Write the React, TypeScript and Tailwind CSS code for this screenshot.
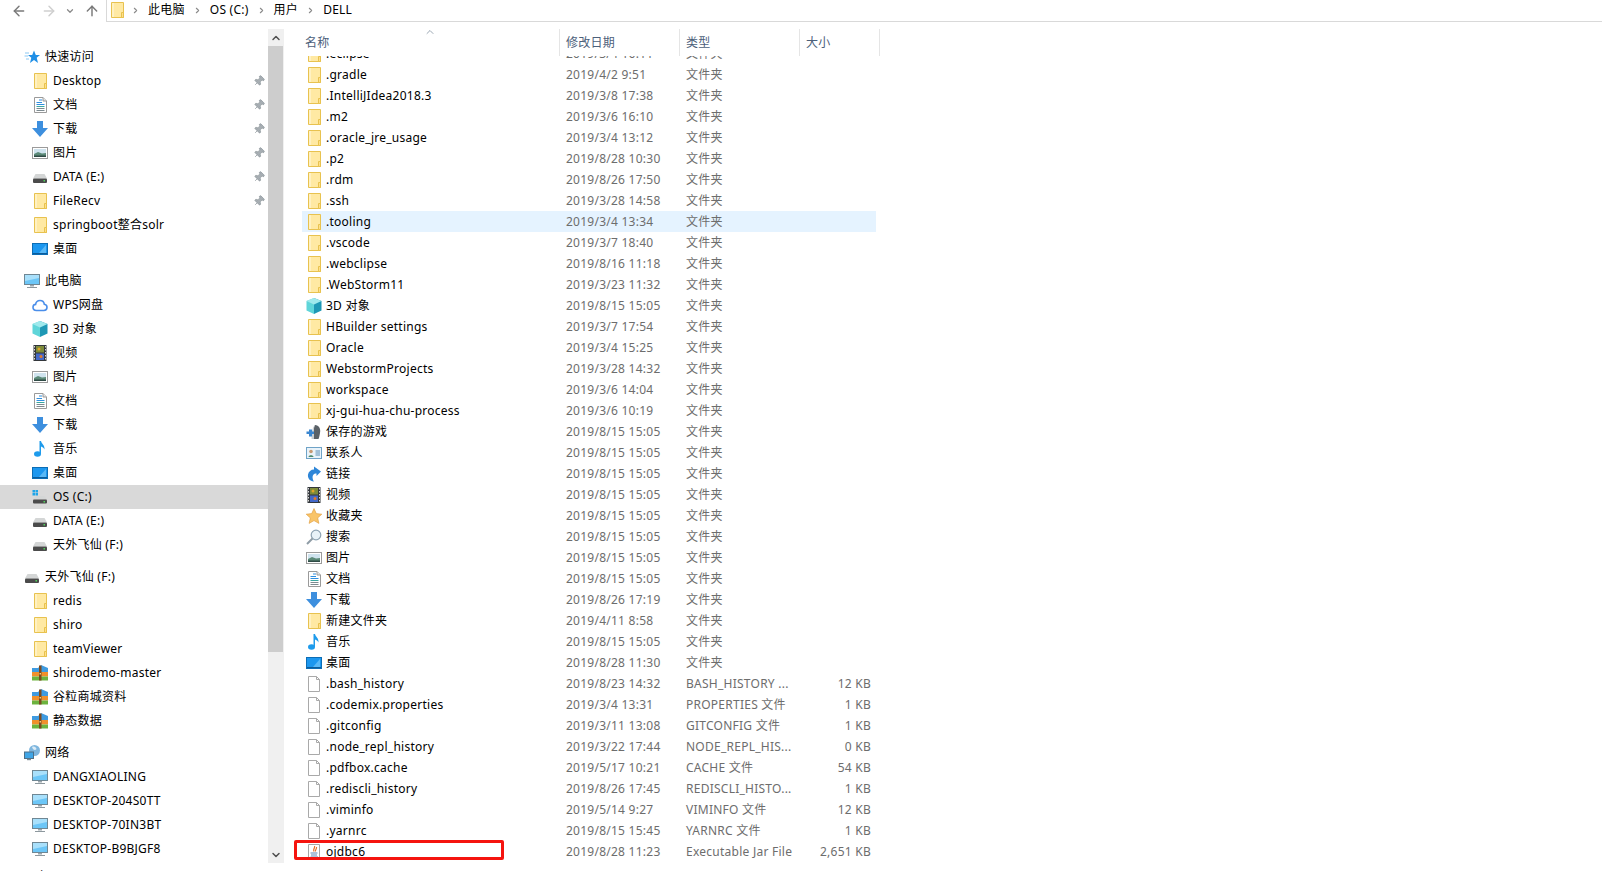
// Explorer window: nav pane on the left, details list on the right
import { ArrowLeft, ArrowRight, ArrowUp, ChevronDown, ChevronRight, ChevronUp, Pin } from 'lucide-react';

type IconName =
  | 'folder' | 'doc' | 'down' | 'image' | 'drive' | 'os' | 'desktop' | 'pc' | 'cloud' | 'cube' | 'film'
  | 'music' | 'archive' | 'net' | 'quick' | 'contacts' | 'link' | 'star' | 'search' | 'games' | 'file' | 'jar';

function Icon({ name }: { name: IconName }) {
  const body = () => {
    switch (name) {
      case 'folder':
        return (
          <>
            <path d="M2.5.5H14.5V15.5H2.5Z" fill="#FFE9A3" stroke="#E8C24F" />
            <path d="M3 1H5V15H3Z" fill="#FFF1C2" />
            <path d="M12.5 10.5H14.5V15.5H12.5Z" fill="#FFE08A" stroke="#E8C24F" />
          </>
        );
      case 'doc':
        return (
          <>
            <path d="M2.5.5H11L14.5 4V15.5H2.5Z" fill="#fff" stroke="#9a9a9a" />
            <path d="M11 .5V4H14.5" fill="#e6e6e6" stroke="#9a9a9a" />
            <path d="M7 3H10M4.5 5.5H10M4.5 7.5H12.5" stroke="#2f8fe0" />
            <path d="M4.5 9.5H12.5" stroke="#3aa7a0" />
            <path d="M4.5 11.5H12.5M4.5 13.5H12.5" stroke="#7d8a90" />
          </>
        );
      case 'down':
        return <path d="M5 0H11V7H16L8 16L0 7H5Z" fill="#3D8FDE" />;
      case 'image':
        return (
          <>
            <rect x=".5" y="2.5" width="15" height="11" fill="#fff" stroke="#9b9b9b" />
            <rect x="2" y="4" width="12" height="5" fill="#cfe3ee" />
            <path d="M2 9L6 7L10 8.500L14 8V12H2Z" fill="#5c8a78" />
            <path d="M2 10.500H14V12H2Z" fill="#2f4a45" />
          </>
        );
      case 'drive':
        return (
          <>
            <path d="M3.500 5H12.500L15 9.500H1Z" fill="#d4d6d6" />
            <rect x="1" y="9.500" width="14" height="4.500" rx="1" fill="#4b4b4b" />
            <rect x="11.500" y="11" width="1.500" height="1.500" fill="#4fd35a" />
          </>
        );
      case 'os':
        return (
          <>
            <path d="M.5 1H3V3.500H.5ZM3.500 1H6V3.500H3.500ZM.5 4H3V6.500H.5ZM3.500 4H6V6.500H3.500Z" fill="#1ea5e9" />
            <path d="M4 7H12.500L15 10.500H1Z" fill="#d4d6d6" />
            <rect x="1" y="10.500" width="14" height="4" rx="1" fill="#4b4b4b" />
            <rect x="11.500" y="12" width="1.500" height="1.500" fill="#4fd35a" />
          </>
        );
      case 'desktop':
        return (
          <>
            <rect x=".5" y="2.500" width="15" height="11" fill="#1c97ef" stroke="#0c6db5" />
            <path d="M7 12L14 4V12Z" fill="#5ab9f7" />
            <path d="M1 12H15V13H1Z" fill="#0c5c9a" />
          </>
        );
      case 'pc':
        return (
          <>
            <rect x=".5" y="1.500" width="15" height="10" fill="#6cc6f7" stroke="#6f8794" />
            <path d="M1 2H15V5L1 8Z" fill="#a9e0fb" />
            <path d="M6 12H10V13.500H6Z" fill="#9aa5ab" />
            <path d="M3 14H13V15H3Z" fill="#8d989e" />
          </>
        );
      case 'cloud':
        return (
          <path
            d="M4.500 13.500C2.300 13.500 1 12 1 10.300C1 8.700 2.200 7.500 3.600 7.400C4 5 6 3.500 8 3.500C10.300 3.500 12 5.200 12.300 7.200C13.900 7.400 15 8.700 15 10.300C15 12.100 13.700 13.500 11.800 13.500Z"
            fill="#fff"
            stroke="#4a8eea"
            strokeWidth="1.600"
          />
        );
      case 'cube':
        return (
          <>
            <path d="M8 0L15.500 3V12.500L8 16Z" fill="#1e98b5" />
            <path d="M8 0L.5 3V12.500L8 16Z" fill="#5fd5d9" />
            <path d="M8 0L15.500 3L8 6.500L.5 3Z" fill="#9fe9ec" />
          </>
        );
      case 'film':
        return (
          <>
            <rect x="1.500" y="0" width="13" height="16" fill="#33373b" />
            <path d="M2.500 1V15M13.500 1V15" stroke="#d8d8d8" strokeDasharray="1.500 1.500" />
            <rect x="4" y="1" width="8" height="6.500" fill="#7c8a3a" />
            <rect x="4" y="8.500" width="8" height="6.500" fill="#4468c8" />
            <circle cx="7" cy="4" r="1.500" fill="#e0a52a" />
            <circle cx="9" cy="11.500" r="1.500" fill="#e07a2a" />
          </>
        );
      case 'music':
        return (
          <>
            <ellipse cx="5.500" cy="13" rx="3.500" ry="2.800" fill="#1e9bec" />
            <path d="M7.500 0H9C9.500 3 13 4 12.500 8.500C11.500 6.500 10.500 6 9 5.500V13H7.500Z" fill="#1e9bec" />
          </>
        );
      case 'archive':
        return (
          <>
            <path d="M0 3L6 3L9 0L16 3V7H0Z" fill="#3f9be0" />
            <path d="M0 7H16V11.500H0Z" fill="#f0902c" />
            <path d="M0 11.500H16V15.500H0Z" fill="#6cb33e" />
            <rect x="7" y="0.500" width="2.500" height="15" fill="#7a4a20" />
            <rect x="7.500" y="8" width="1.500" height="1.500" fill="#f3d27a" />
          </>
        );
      case 'net':
        return (
          <>
            <circle cx="10.500" cy="5.500" r="5.500" fill="#7fb6de" />
            <path d="M8 2C10 1 12 2 12.500 4C11 6 9 5 8 2Z" fill="#dcecf6" />
            <rect x=".5" y="7" width="9" height="6.500" fill="#3fa5e6" stroke="#4d6f87" />
            <path d="M3 14.500H7" stroke="#7a8a94" strokeWidth="1.400" />
          </>
        );
      case 'quick':
        return (
          <>
            <path d="M10 1.500L11.800 6H16L12.700 8.800L14 14L10 11L6 14L7.300 8.800L4 6H8.200Z" fill="#1f8fe6" />
            <path d="M1 4H5M.5 7H4M2 10H5" stroke="#8cc8f2" />
          </>
        );
      case 'contacts':
        return (
          <>
            <rect x=".5" y="2.500" width="15" height="11" fill="#e9f3fa" stroke="#6fa3c7" />
            <circle cx="5" cy="6.500" r="1.800" fill="#c79a72" />
            <path d="M2.500 12C2.500 9.500 7.500 9.500 7.500 12Z" fill="#4d8a6a" />
            <path d="M9.500 6H14M9.500 8H14M9.500 10H14" stroke="#5a8eb5" />
          </>
        );
      case 'link':
        return (
          <path
            d="M8 0.500L15 5.500L10.500 10V7.500C7.500 7.500 6 9.500 6.800 13C7 14 7.500 15 8 15.500C3.500 15 1.500 12 2 8.500C2.500 5.500 5 3.500 8 3.500Z"
            fill="#2e86d8"
          />
        );
      case 'star':
        return (
          <path
            d="M8 .5L10.300 5.600L15.800 6.200L11.700 9.900L12.900 15.400L8 12.600L3.100 15.400L4.300 9.900L.2 6.200L5.700 5.600Z"
            fill="#f9c468"
            stroke="#dd9a3c"
            strokeWidth=".6"
          />
        );
      case 'search':
        return (
          <>
            <circle cx="10" cy="6" r="4.800" fill="#e8f2f8" stroke="#8ea3b3" strokeWidth="1.200" />
            <path d="M6.500 9.500L1 15" stroke="#8f9ca6" strokeWidth="2" />
          </>
        );
      case 'games':
        return (
          <>
            <path d="M9 1C13 1 15 5 14 9C13.500 12 13 14 12.500 15H7.500C8.500 11 6.500 5 9 1Z" fill="#5a6167" />
            <path d="M9 1C7 5 8.500 11 7.500 15H5.500C6 11 5 5 9 1Z" fill="#c9ced2" />
            <path d="M3 5.500H6V7.500H8V10H6V12.500H3V10H.5V7.500H3Z" fill="#3a86d0" />
          </>
        );
      case 'file':
        return (
          <>
            <path d="M2.500.5H10.500L13.500 3.500V15.500H2.500Z" fill="#fff" stroke="#a9a9a9" />
            <path d="M10.500.5V3.500H13.500" fill="none" stroke="#a9a9a9" />
          </>
        );
      case 'jar':
        return (
          <>
            <path d="M2.500.5H13.500V15.500H2.500Z" fill="#fff" stroke="#a5a5a5" />
            <path d="M8.500 2C9.500 4 6.500 5 8 7.500M10.500 3C11 5 9 5.500 9.500 7.500" fill="none" stroke="#e4712a" strokeWidth="1.200" />
            <path d="M4.500 9H11.500M5 11H11M4.500 13H12" stroke="#5c87b5" />
          </>
        );
    }
  };
  return (
    <svg viewBox="0 0 16 16" className="w-4 h-4 shrink-0">
      {body()}
    </svg>
  );
}

type NavItem = { icon: IconName; label: string; pinned?: boolean; active?: boolean };

const navSections: { header: { icon: IconName; label: string }; items: NavItem[] }[] = [
  {
    header: { icon: 'quick', label: '快速访问' },
    items: [
      { icon: 'folder', label: 'Desktop', pinned: true },
      { icon: 'doc', label: '文档', pinned: true },
      { icon: 'down', label: '下载', pinned: true },
      { icon: 'image', label: '图片', pinned: true },
      { icon: 'drive', label: 'DATA (E:)', pinned: true },
      { icon: 'folder', label: 'FileRecv', pinned: true },
      { icon: 'folder', label: 'springboot整合solr' },
      { icon: 'desktop', label: '桌面' },
    ],
  },
  {
    header: { icon: 'pc', label: '此电脑' },
    items: [
      { icon: 'cloud', label: 'WPS网盘' },
      { icon: 'cube', label: '3D 对象' },
      { icon: 'film', label: '视频' },
      { icon: 'image', label: '图片' },
      { icon: 'doc', label: '文档' },
      { icon: 'down', label: '下载' },
      { icon: 'music', label: '音乐' },
      { icon: 'desktop', label: '桌面' },
      { icon: 'os', label: 'OS (C:)', active: true },
      { icon: 'drive', label: 'DATA (E:)' },
      { icon: 'drive', label: '天外飞仙 (F:)' },
    ],
  },
  {
    header: { icon: 'drive', label: '天外飞仙 (F:)' },
    items: [
      { icon: 'folder', label: 'redis' },
      { icon: 'folder', label: 'shiro' },
      { icon: 'folder', label: 'teamViewer' },
      { icon: 'archive', label: 'shirodemo-master' },
      { icon: 'archive', label: '谷粒商城资料' },
      { icon: 'archive', label: '静态数据' },
    ],
  },
  {
    header: { icon: 'net', label: '网络' },
    items: [
      { icon: 'pc', label: 'DANGXIAOLING' },
      { icon: 'pc', label: 'DESKTOP-204S0TT' },
      { icon: 'pc', label: 'DESKTOP-70IN3BT' },
      { icon: 'pc', label: 'DESKTOP-B9BJGF8' },
    ],
  },
];

type FileRow = { icon: IconName; name: string; date: string; type: string; size?: string; hover?: boolean };

const dir = '文件夹';
const files: FileRow[] = [
  { icon: 'folder', name: '.eclipse', date: '2019/3/4 16:11', type: dir },
  { icon: 'folder', name: '.gradle', date: '2019/4/2 9:51', type: dir },
  { icon: 'folder', name: '.IntelliJIdea2018.3', date: '2019/3/8 17:38', type: dir },
  { icon: 'folder', name: '.m2', date: '2019/3/6 16:10', type: dir },
  { icon: 'folder', name: '.oracle_jre_usage', date: '2019/3/4 13:12', type: dir },
  { icon: 'folder', name: '.p2', date: '2019/8/28 10:30', type: dir },
  { icon: 'folder', name: '.rdm', date: '2019/8/26 17:50', type: dir },
  { icon: 'folder', name: '.ssh', date: '2019/3/28 14:58', type: dir },
  { icon: 'folder', name: '.tooling', date: '2019/3/4 13:34', type: dir, hover: true },
  { icon: 'folder', name: '.vscode', date: '2019/3/7 18:40', type: dir },
  { icon: 'folder', name: '.webclipse', date: '2019/8/16 11:18', type: dir },
  { icon: 'folder', name: '.WebStorm11', date: '2019/3/23 11:32', type: dir },
  { icon: 'cube', name: '3D 对象', date: '2019/8/15 15:05', type: dir },
  { icon: 'folder', name: 'HBuilder settings', date: '2019/3/7 17:54', type: dir },
  { icon: 'folder', name: 'Oracle', date: '2019/3/4 15:25', type: dir },
  { icon: 'folder', name: 'WebstormProjects', date: '2019/3/28 14:32', type: dir },
  { icon: 'folder', name: 'workspace', date: '2019/3/6 14:04', type: dir },
  { icon: 'folder', name: 'xj-gui-hua-chu-process', date: '2019/3/6 10:19', type: dir },
  { icon: 'games', name: '保存的游戏', date: '2019/8/15 15:05', type: dir },
  { icon: 'contacts', name: '联系人', date: '2019/8/15 15:05', type: dir },
  { icon: 'link', name: '链接', date: '2019/8/15 15:05', type: dir },
  { icon: 'film', name: '视频', date: '2019/8/15 15:05', type: dir },
  { icon: 'star', name: '收藏夹', date: '2019/8/15 15:05', type: dir },
  { icon: 'search', name: '搜索', date: '2019/8/15 15:05', type: dir },
  { icon: 'image', name: '图片', date: '2019/8/15 15:05', type: dir },
  { icon: 'doc', name: '文档', date: '2019/8/15 15:05', type: dir },
  { icon: 'down', name: '下载', date: '2019/8/26 17:19', type: dir },
  { icon: 'folder', name: '新建文件夹', date: '2019/4/11 8:58', type: dir },
  { icon: 'music', name: '音乐', date: '2019/8/15 15:05', type: dir },
  { icon: 'desktop', name: '桌面', date: '2019/8/28 11:30', type: dir },
  { icon: 'file', name: '.bash_history', date: '2019/8/23 14:32', type: 'BASH_HISTORY ...', size: '12 KB' },
  { icon: 'file', name: '.codemix.properties', date: '2019/3/4 13:31', type: 'PROPERTIES 文件', size: '1 KB' },
  { icon: 'file', name: '.gitconfig', date: '2019/3/11 13:08', type: 'GITCONFIG 文件', size: '1 KB' },
  { icon: 'file', name: '.node_repl_history', date: '2019/3/22 17:44', type: 'NODE_REPL_HIS...', size: '0 KB' },
  { icon: 'file', name: '.pdfbox.cache', date: '2019/5/17 10:21', type: 'CACHE 文件', size: '54 KB' },
  { icon: 'file', name: '.rediscli_history', date: '2019/8/26 17:45', type: 'REDISCLI_HISTO...', size: '1 KB' },
  { icon: 'file', name: '.viminfo', date: '2019/5/14 9:27', type: 'VIMINFO 文件', size: '12 KB' },
  { icon: 'file', name: '.yarnrc', date: '2019/8/15 15:45', type: 'YARNRC 文件', size: '1 KB' },
  { icon: 'jar', name: 'ojdbc6', date: '2019/8/28 11:23', type: 'Executable Jar File', size: '2,651 KB' },
];

function Crumb({ label }: { label: string }) {
  return (
    <>
      <ChevronRight className="w-[9px] h-[9px] text-[#8a8a8a] shrink-0" strokeWidth={3} />
      <span className="mx-2 text-black">{label}</span>
    </>
  );
}

function NavRow({ item }: { item: NavItem }) {
  return (
    <div className={`h-6 flex items-center pl-8 pr-[3px] ${item.active ? 'bg-[#d9d9d9]' : ''}`}>
      <Icon name={item.icon} />
      <span className="ml-[5px] text-black">{item.label}</span>
      {item.pinned && <Pin className="ml-auto w-3 h-3 rotate-45 text-[#8f979d] fill-[#a7aeb3]" strokeWidth={1.5} />}
    </div>
  );
}

export default function App() {
  return (
    <div className="w-[1602px] h-[871px] overflow-hidden bg-white text-[12px] tracking-[0.25px] font-['Noto_Sans','Noto_Sans_CJK_SC',sans-serif]">
      {/* nav buttons + address bar */}
      <div className="h-[22px] flex items-center">
        <div className="w-[106px] h-full flex items-center shrink-0">
          <ArrowLeft className="ml-[11px] w-4 h-4 text-[#7a7a7a]" strokeWidth={2.2} />
          <ArrowRight className="ml-[14px] w-4 h-4 text-[#cfcfcf]" strokeWidth={2.2} />
          <ChevronDown className="ml-2 w-[10px] h-[10px] text-[#8a8a8a]" strokeWidth={3} />
          <ArrowUp className="ml-[9px] w-4 h-4 text-[#7a7a7a]" strokeWidth={2.2} />
        </div>
        <div className="flex-1 h-full flex items-center border-l border-b border-[#d9d9d9] pl-[2px] pb-[1px]">
          <Icon name="folder" />
          <span className="w-[6px]" />
          <Crumb label="此电脑" />
          <Crumb label="OS (C:)" />
          <Crumb label="用户" />
          <Crumb label="DELL" />
        </div>
      </div>

      <div className="h-[841px] flex">
        {/* nav pane */}
        <div className="w-[268px] shrink-0 pt-[23px] flex flex-col gap-2 overflow-hidden">
          {navSections.map((section) => (
            <div key={section.header.label}>
              <div className="h-6 flex items-center pl-6">
                <Icon name={section.header.icon} />
                <span className="ml-[5px] text-black">{section.header.label}</span>
              </div>
              {section.items.map((item) => (
                <NavRow key={item.label + item.icon} item={item} />
              ))}
            </div>
          ))}
        </div>

        {/* nav pane scrollbar */}
        <div className="w-4 shrink-0 mt-[7px] bg-[#f0f0f0] flex flex-col">
          <div className="h-[17px] flex items-center justify-center">
            <ChevronUp className="w-3 h-3 text-[#505050]" strokeWidth={3} />
          </div>
          <div className="h-[606px] w-[15px] bg-[#cdcdcd]" />
          <div className="mt-auto h-[17px] flex items-center justify-center">
            <ChevronDown className="w-3 h-3 text-[#505050]" strokeWidth={3} />
          </div>
        </div>

        {/* details list */}
        <div className="flex-1 pt-[7px] relative overflow-hidden">
          <div className="h-[27px] flex text-[#4c607a] relative z-10 bg-white">
            <div className="w-[276px] pl-[21px] flex items-center border-r border-[#e5e5e5]">名称</div>
            <div className="w-[120px] pl-[6px] flex items-center border-r border-[#e5e5e5]">修改日期</div>
            <div className="w-[120px] pl-[6px] flex items-center border-r border-[#e5e5e5]">类型</div>
            <div className="w-[80px] pl-[6px] flex items-center border-r border-[#e5e5e5]">大小</div>
            <ChevronUp className="absolute left-[140px] -top-[3px] w-[12px] h-[12px] text-[#7a8a99]" strokeWidth={1.5} />
          </div>
          <div className="-mt-[13px] ml-[18px] w-[574px]">
            {files.map((f) => (
              <div key={f.name} className={`h-[21px] flex items-center ${f.hover ? 'bg-[#e5f3ff]' : ''}`}>
                <div className="w-[258px] flex items-center pl-1">
                  <Icon name={f.icon} />
                  <span className="ml-1 text-black">{f.name}</span>
                </div>
                <div className="w-[120px] pl-[6px] text-[#6d6d6d]">{f.date}</div>
                <div className="w-[120px] pl-[6px] text-[#6d6d6d] whitespace-nowrap">{f.type}</div>
                <div className="w-[76px] pr-[5px] text-right text-[#6d6d6d]">{f.size}</div>
              </div>
            ))}
          </div>
          {/* red annotation around ojdbc6 */}
          <div className="absolute left-[10px] top-[818px] w-[210px] h-[20px] border-[3px] border-[#f5140f] rounded-[2px]" />
        </div>
      </div>

      {/* status bar, cut off by the window edge */}
      <div className="h-2 overflow-hidden pl-[18px] pt-[5px] text-black">39 个项目</div>
    </div>
  );
}
